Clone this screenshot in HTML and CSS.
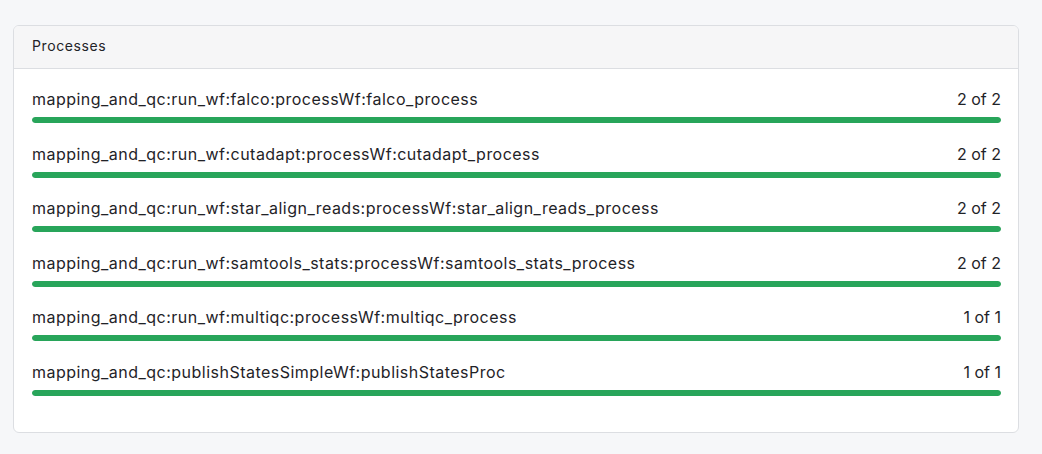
FILE: index.html
```html
<!DOCTYPE html>
<html>
<head>
<meta charset="utf-8">
<link rel="stylesheet" href="styles.css">
</head>
<body>
<div class="card">
  <div class="card-header">Processes</div>
  <div class="card-body">
    <div class="proc">
      <div class="proc-line"><span class="proc-name">mapping_and_qc:run_wf:falco:processWf:falco_process</span><span class="proc-count">2 of 2</span></div>
      <div class="bar"><div class="bar-fill" style="width:100%"></div></div>
    </div>
    <div class="proc">
      <div class="proc-line"><span class="proc-name">mapping_and_qc:run_wf:cutadapt:processWf:cutadapt_process</span><span class="proc-count">2 of 2</span></div>
      <div class="bar"><div class="bar-fill" style="width:100%"></div></div>
    </div>
    <div class="proc">
      <div class="proc-line"><span class="proc-name">mapping_and_qc:run_wf:star_align_reads:processWf:star_align_reads_process</span><span class="proc-count">2 of 2</span></div>
      <div class="bar"><div class="bar-fill" style="width:100%"></div></div>
    </div>
    <div class="proc">
      <div class="proc-line"><span class="proc-name">mapping_and_qc:run_wf:samtools_stats:processWf:samtools_stats_process</span><span class="proc-count">2 of 2</span></div>
      <div class="bar"><div class="bar-fill" style="width:100%"></div></div>
    </div>
    <div class="proc">
      <div class="proc-line"><span class="proc-name">mapping_and_qc:run_wf:multiqc:processWf:multiqc_process</span><span class="proc-count">1 of 1</span></div>
      <div class="bar"><div class="bar-fill" style="width:100%"></div></div>
    </div>
    <div class="proc">
      <div class="proc-line"><span class="proc-name">mapping_and_qc:publishStatesSimpleWf:publishStatesProc</span><span class="proc-count">1 of 1</span></div>
      <div class="bar"><div class="bar-fill" style="width:100%"></div></div>
    </div>
  </div>
</div>
</body>
</html>
```
FILE: styles.css
```css
html, body {
  margin: 0;
  padding: 0;
  background: #f6f7f9;
  font-family: Inter, "Liberation Sans", Arial, sans-serif;
  color: #1f2328;
}
.card {
  margin: 25px 0 0 13px;
  width: 1006px;
  box-sizing: border-box;
  background: #ffffff;
  border: 1px solid #dcdee2;
  border-radius: 6px;
  overflow: hidden;
}
.card-header {
  background: #f6f6f7;
  border-bottom: 1px solid #dcdee2;
  font-size: 14px;
  letter-spacing: 0.6px;
  line-height: 20px;
  padding: 10px 18px 12px 18px;
}
.card-body {
  padding: 18px 17px 17px 18px;
}
.proc {
  padding-bottom: 18.6px;
}
.proc-line {
  display: flex;
  justify-content: space-between;
  align-items: center;
  font-size: 16px;
  line-height: 24px;
  height: 24px;
}
.proc-name {
  letter-spacing: 0.48px;
}
.bar {
  margin-top: 6px;
  height: 6px;
  border-radius: 3px;
  background: #e6e8eb;
  overflow: hidden;
}
.bar-fill {
  height: 100%;
  background: #28a55a;
  border-radius: 3px;
}
```
